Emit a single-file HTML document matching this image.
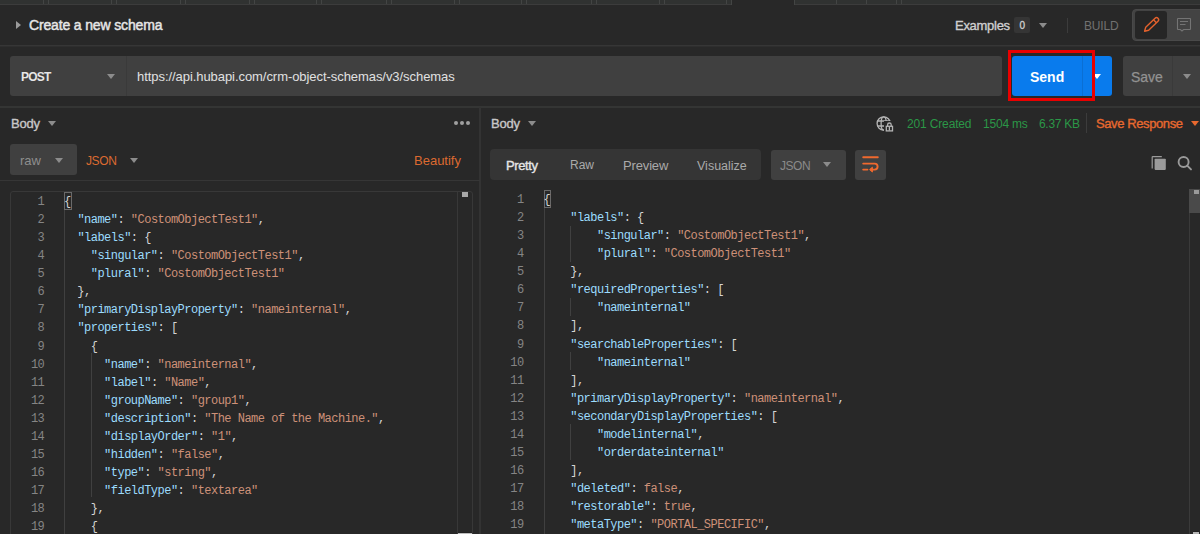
<!DOCTYPE html>
<html><head><meta charset="utf-8">
<style>
*{box-sizing:border-box;margin:0;padding:0}
html,body{width:1200px;height:534px;overflow:hidden;background:#282828}
body{position:relative;font-family:"Liberation Sans",sans-serif;color:#d0d0d0}
.a{position:absolute}
.t{position:absolute;white-space:nowrap;line-height:1}
.tabs{left:0;top:0;width:1200px;height:5px;background:#303231;border-bottom:1px solid #3c3c3c}
.sep{position:absolute;top:0;height:4px;width:1px;background:#434544}
.hline{position:absolute;height:1px;background:#363636}
.tri{position:absolute;width:0;height:0;border-left:4px solid transparent;border-right:4px solid transparent;border-top:5px solid #8c8c8c}
.code{position:absolute;font-family:"Liberation Mono",monospace;font-size:12px;letter-spacing:-0.52px;line-height:18.07px;white-space:pre;color:#d4d4d4}
.ln{position:absolute;font-family:"Liberation Mono",monospace;font-size:12px;letter-spacing:-0.52px;line-height:18.07px;white-space:pre;color:#858585;text-align:right}
.k{color:#9cdcfe}
.s{color:#ce9178}
.guide{position:absolute;width:1px;background:#404040}
</style></head><body>

<!-- top tab strip -->
<div class="a tabs"></div>
<div class="sep" style="left:43px"></div><div class="sep" style="left:48px"></div><div class="sep" style="left:111px"></div><div class="sep" style="left:116px"></div><div class="sep" style="left:180px"></div><div class="sep" style="left:185px"></div><div class="sep" style="left:249px"></div><div class="sep" style="left:254px"></div><div class="sep" style="left:316px"></div><div class="sep" style="left:321px"></div><div class="sep" style="left:386px"></div><div class="sep" style="left:391px"></div><div class="sep" style="left:454px"></div><div class="sep" style="left:459px"></div><div class="sep" style="left:521px"></div><div class="sep" style="left:526px"></div><div class="sep" style="left:591px"></div><div class="sep" style="left:596px"></div><div class="sep" style="left:659px"></div><div class="sep" style="left:664px"></div><div class="sep" style="left:726px"></div><div class="sep" style="left:836px"></div><div class="sep" style="left:866px"></div><div class="sep" style="left:896px"></div><div class="sep" style="left:901px"></div>
<div class="a" style="left:731px;top:0;width:64px;height:5px;background:#282828;border-left:1px solid #434544;border-right:1px solid #434544"></div>


<!-- title row -->
<div class="a" style="left:16px;top:21px;width:0;height:0;border-top:4px solid transparent;border-bottom:4px solid transparent;border-left:5px solid #9a9a9a"></div>
<div class="t" style="left:29px;top:18px;font-size:14px;letter-spacing:-0.15px;-webkit-text-stroke:0.45px #e6e6e6;color:#e6e6e6">Create a new schema</div>

<div class="t" style="left:955px;top:19px;font-size:13px;letter-spacing:-0.28px;-webkit-text-stroke:0.35px #cfcfcf;color:#cfcfcf">Examples</div>
<div class="a" style="left:1014px;top:17px;width:16px;height:16px;background:#353535;border-radius:2px"></div>
<div class="t" style="left:1019.5px;top:21px;font-size:10px;-webkit-text-stroke:0.3px #d0d0d0;color:#d0d0d0">0</div>
<div class="tri" style="left:1039px;top:23px"></div>
<div class="a" style="left:1067px;top:18px;width:1px;height:15px;background:#3c3c3c"></div>
<div class="t" style="left:1084px;top:20px;font-size:12px;letter-spacing:-0.2px;color:#717171">BUILD</div>
<div class="a" style="left:1132px;top:9px;width:80px;height:32px;background:#434343;border:1px solid #494949;border-radius:4px"></div>
<div class="a" style="left:1135px;top:11px;width:32px;height:28px;background:#262626;border-radius:3px"></div>

<svg class="a" style="left:1130px;top:8px" width="70" height="36" viewBox="1130 8 70 36">
<g transform="translate(1144.6,31.2) rotate(-44)" fill="none" stroke="#e5622d" stroke-width="1.4" stroke-linejoin="round">
<path d="M0,0 L3.6,-2.1 L16.6,-2.1 Q18.6,-2.1 18.6,0 Q18.6,2.1 16.6,2.1 L3.6,2.1 Z"/>
<path d="M14.4,-2.1 V2.1"/>
</g>
<g fill="none" stroke="#747474" stroke-width="1.1">
<path d="M1178.5,18.5 H1190 Q1190.5,18.5 1190.5,19 V29 Q1190.5,29.5 1190,29.5 H1183.6 L1182,31 L1180.4,29.5 H1178 Q1177.5,29.5 1177.5,29 V19 Q1177.5,18.5 1178,18.5 Z"/>
<path d="M1180,21.5 H1188 M1180,24.5 H1185.5"/>
</g>
</svg>
<div class="hline" style="left:0;top:45px;width:1200px;height:2px;background:#363636;border-bottom:1px solid #2e2e2e"></div>

<!-- URL row -->
<div class="a" style="left:10px;top:56px;width:992px;height:40px;background:#404040;border-radius:3px"></div>
<div class="a" style="left:126px;top:56px;width:1px;height:40px;background:#3a3a3a"></div>
<div class="t" style="left:21px;top:71px;font-size:12px;letter-spacing:-0.8px;font-weight:bold;color:#e6e6e6">POST</div>
<div class="tri" style="left:107px;top:74px"></div>
<div class="t" style="left:137px;top:70px;font-size:13px;letter-spacing:-0.06px;color:#e0e0e0">https://api.hubapi.com/crm-object-schemas/v3/schemas</div>

<div class="a" style="left:1012px;top:56px;width:100px;height:40px;background:#097bed;border-radius:3px"></div>
<div class="a" style="left:1082px;top:56px;width:1px;height:40px;background:#0a6fd4"></div>
<div class="t" style="left:1030px;top:70px;font-size:14px;font-weight:bold;color:#ffffff">Send</div>
<div class="tri" style="left:1093px;top:74px;border-top-color:#fff"></div>
<div class="a" style="left:1008px;top:50px;width:87px;height:51px;border:3px solid #ea0000"></div>

<div class="a" style="left:1123px;top:56px;width:90px;height:40px;background:#404040;border-radius:3px"></div>
<div class="a" style="left:1172px;top:56px;width:1px;height:40px;background:#3a3a3a"></div>
<div class="t" style="left:1131px;top:70px;font-size:14px;-webkit-text-stroke:0.25px #929292;color:#929292">Save</div>
<div class="tri" style="left:1183px;top:74px"></div>

<div class="hline" style="left:0;top:106px;width:1200px;height:2px;background:#343534"></div>

<!-- divider -->
<div class="a" style="left:479px;top:107px;width:2px;height:427px;background:#333333"></div>

<!-- LEFT PANEL -->
<div class="t" style="left:11px;top:117px;font-size:13px;letter-spacing:-0.25px;-webkit-text-stroke:0.35px #c8c8c8;color:#c8c8c8">Body</div>
<div class="tri" style="left:48px;top:121px"></div>
<div class="a" style="left:454px;top:121px;width:4px;height:4px;border-radius:2px;background:#a0a0a0"></div>
<div class="a" style="left:460px;top:121px;width:4px;height:4px;border-radius:2px;background:#a0a0a0"></div>
<div class="a" style="left:466px;top:121px;width:4px;height:4px;border-radius:2px;background:#a0a0a0"></div>

<div class="a" style="left:10px;top:144px;width:67px;height:31px;background:#404040;border-radius:3px"></div>
<div class="t" style="left:20px;top:154px;font-size:13px;color:#8e8e8e">raw</div>
<div class="tri" style="left:55px;top:158px"></div>
<div class="t" style="left:86px;top:155px;font-size:12px;letter-spacing:-0.4px;color:#dc6a30">JSON</div>
<div class="tri" style="left:130px;top:158px"></div>
<div class="t" style="left:414px;top:154px;font-size:13px;color:#dc6a30">Beautify</div>

<div class="hline" style="left:0;top:180px;width:480px"></div>

<div class="a" style="left:10px;top:191px;width:463px;height:360px;border:1px solid #383838;border-radius:3px"></div>

<!-- RIGHT PANEL -->
<div class="t" style="left:491px;top:117px;font-size:13px;letter-spacing:-0.25px;-webkit-text-stroke:0.35px #c8c8c8;color:#c8c8c8">Body</div>
<div class="tri" style="left:528px;top:121px"></div>

<svg class="a" style="left:872px;top:112px" width="26" height="22" viewBox="872 112 26 22">
<g fill="none" stroke="#b4b4b4" stroke-width="1.3">
<circle cx="883.7" cy="123.5" r="6.6"/>
<ellipse cx="883.7" cy="123.5" rx="2.6" ry="6.6"/>
<path d="M877.3,121 H890.1 M877.3,126 H890.1"/>
</g>
<rect x="884" y="121" width="11" height="12" fill="#282828"/>
<g fill="none" stroke="#b4b4b4" stroke-width="1.3">
<rect x="886.3" y="126.3" width="6.2" height="4.6"/>
<path d="M887.6,126.3 V124.8 A1.8,1.8 0 0 1 891.2,124.8 V126.3"/>
<path d="M889.4,127 V130.5"/>
</g>
</svg>
<div class="t" style="left:907px;top:118px;font-size:12px;letter-spacing:-0.15px;color:#2b9747">201 Created</div>
<div class="t" style="left:983px;top:118px;font-size:12px;letter-spacing:-0.2px;color:#2b9747">1504 ms</div>
<div class="t" style="left:1039px;top:118px;font-size:12px;letter-spacing:-0.3px;color:#2b9747">6.37 KB</div>
<div class="a" style="left:1086px;top:113px;width:1px;height:20px;background:#3c3c3c"></div>
<div class="t" style="left:1096px;top:117px;font-size:13px;letter-spacing:-0.4px;-webkit-text-stroke:0.35px #e8692f;color:#e8692f">Save Response</div>
<div class="tri" style="left:1191px;top:121px;border-top-color:#e8692f"></div>

<div class="a" style="left:490px;top:149px;width:271px;height:31px;background:#353535;border-radius:4px"></div>
<div class="t" style="left:506px;top:159px;font-size:13px;letter-spacing:-0.4px;-webkit-text-stroke:0.35px #e6e6e6;color:#e6e6e6">Pretty</div>
<div class="t" style="left:570px;top:159px;font-size:12px;color:#aaaaaa">Raw</div>
<div class="t" style="left:623px;top:159px;font-size:13px;letter-spacing:-0.15px;color:#aaaaaa">Preview</div>
<div class="t" style="left:697px;top:160px;font-size:12.5px;color:#aaaaaa">Visualize</div>

<div class="a" style="left:771px;top:150px;width:75px;height:30px;background:#404040;border-radius:3px"></div>
<div class="t" style="left:780px;top:160px;font-size:12px;letter-spacing:-0.45px;color:#8a8a8a">JSON</div>
<div class="tri" style="left:823px;top:162px"></div>
<div class="a" style="left:855px;top:150px;width:31px;height:30px;background:#404040;border-radius:3px"></div>


<svg class="a" style="left:855px;top:150px" width="31" height="30" viewBox="855 150 31 30">
<g fill="none" stroke="#f0692e" stroke-width="1.9" stroke-linecap="round">
<path d="M863.2,157.3 H877.8"/>
<path d="M863.2,163.6 H874.6 A3,3 0 0 1 874.6,169.6 H871.4"/>
<path d="M863.2,169.6 H867.4"/>
</g>
<path d="M869.6,169.6 L872.4,167.2 V172 Z" fill="#f0692e" stroke="#f0692e" stroke-width="1" stroke-linejoin="round"/>
</svg>
<svg class="a" style="left:1145px;top:150px" width="55" height="25" viewBox="1145 150 55 25">
<path d="M1152.2,168.6 V157.2 A0.6,0.6 0 0 1 1152.8,156.6 H1161.8" fill="none" stroke="#9a9a9a" stroke-width="1.2"/>
<rect x="1154.6" y="158.8" width="11.2" height="11.1" rx="0.8" fill="#9a9a9a"/>
<circle cx="1183.6" cy="162" r="5" fill="none" stroke="#9a9a9a" stroke-width="1.9"/>
<path d="M1187.2,165.6 L1191,169.4" stroke="#9a9a9a" stroke-width="1.9" stroke-linecap="round"/>
</svg>
<!-- LEFT EDITOR -->
<div class="ln" style="left:19.3px;top:193px;width:25px">1
2
3
4
5
6
7
8
9
10
11
12
13
14
15
16
17
18
19</div>
<div class="guide" style="left:64px;top:210px;height:330px"></div>
<div class="guide" style="left:91px;top:353px;height:144px"></div>
<div class="a" style="left:64px;top:192px;width:8px;height:18px;border:1px solid #6a6a6a"></div>
<div class="code" style="left:64px;top:193px">{
  <span class="k">"name"</span>: <span class="s">"CostomObjectTest1"</span>,
  <span class="k">"labels"</span>: {
    <span class="k">"singular"</span>: <span class="s">"CostomObjectTest1"</span>,
    <span class="k">"plural"</span>: <span class="s">"CostomObjectTest1"</span>
  },
  <span class="k">"primaryDisplayProperty"</span>: <span class="s">"nameinternal"</span>,
  <span class="k">"properties"</span>: [
    {
      <span class="k">"name"</span>: <span class="s">"nameinternal"</span>,
      <span class="k">"label"</span>: <span class="s">"Name"</span>,
      <span class="k">"groupName"</span>: <span class="s">"group1"</span>,
      <span class="k">"description"</span>: <span class="s">"The Name of the Machine."</span>,
      <span class="k">"displayOrder"</span>: <span class="s">"1"</span>,
      <span class="k">"hidden"</span>: <span class="s">"false"</span>,
      <span class="k">"type"</span>: <span class="s">"string"</span>,
      <span class="k">"fieldType"</span>: <span class="s">"textarea"</span>
    },
    {</div>
<div class="a" style="left:457px;top:191px;width:1px;height:343px;background:#383838"></div>
<div class="a" style="left:462px;top:192px;width:6px;height:5px;background:#a8a8a8"></div>

<!-- RIGHT EDITOR -->
<div class="ln" style="left:498.6px;top:191px;width:25px">1
2
3
4
5
6
7
8
9
10
11
12
13
14
15
16
17
18
19</div>
<div class="guide" style="left:544px;top:207px;height:330px"></div>
<div class="guide" style="left:570px;top:226px;height:36px"></div>
<div class="guide" style="left:570px;top:298px;height:18px"></div>
<div class="guide" style="left:570px;top:352px;height:18px"></div>
<div class="guide" style="left:570px;top:424px;height:36px"></div>
<div class="a" style="left:544px;top:190px;width:7px;height:18px;border:1px solid #6a6a6a"></div>
<div class="code" style="left:543.5px;top:191px">{
    <span class="k">"labels"</span>: {
        <span class="k">"singular"</span>: <span class="s">"CostomObjectTest1"</span>,
        <span class="k">"plural"</span>: <span class="s">"CostomObjectTest1"</span>
    },
    <span class="k">"requiredProperties"</span>: [
        <span class="k">"nameinternal"</span>
    ],
    <span class="k">"searchableProperties"</span>: [
        <span class="k">"nameinternal"</span>
    ],
    <span class="k">"primaryDisplayProperty"</span>: <span class="s">"nameinternal"</span>,
    <span class="k">"secondaryDisplayProperties"</span>: [
        <span class="k">"modelinternal"</span>,
        <span class="k">"orderdateinternal"</span>
    ],
    <span class="k">"deleted"</span>: <span class="s">false</span>,
    <span class="k">"restorable"</span>: <span class="s">true</span>,
    <span class="k">"metaType"</span>: <span class="s">"PORTAL_SPECIFIC"</span>,</div>
<div class="a" style="left:1189px;top:189px;width:1px;height:345px;background:#3a3a3a"></div>
<div class="a" style="left:1189px;top:189px;width:11px;height:24px;background:#4a4a4a"></div>
<div class="a" style="left:1194px;top:190px;width:5px;height:4px;background:#9a9a9a"></div>

<div class="a" style="left:458px;top:532px;width:14px;height:1px;background:#222"></div>
<div class="a" style="left:458px;top:533px;width:14px;height:1px;background:#bdbdbd"></div>
<div class="a" style="left:1193px;top:531px;width:6px;height:1px;background:#222"></div>
<div class="a" style="left:1193px;top:532px;width:6px;height:2px;background:#b5b5b5"></div>
</body></html>
